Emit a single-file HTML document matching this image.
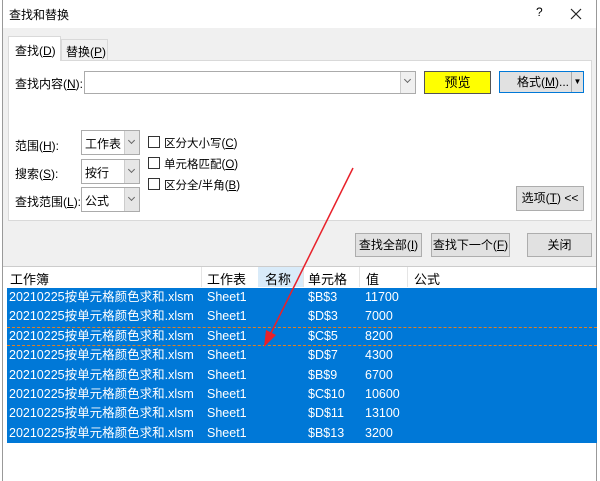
<!DOCTYPE html>
<html><head><meta charset="utf-8"><style>
*{margin:0;padding:0;box-sizing:border-box}
body{width:600px;height:481px;overflow:hidden;background:#fff;font-family:"Liberation Sans","Noto Sans CJK SC",sans-serif;font-size:12px;color:#000;position:relative}
.a{position:absolute}
.u{text-decoration:underline}
.btn{position:absolute;background:#e1e1e1;border:1px solid #adadad;text-align:center;font-size:12px}
.dd{position:absolute;left:81px;width:59px;height:25px;border:1px solid #ababab;background:#fff}
.dd span{position:absolute;left:3px;top:4px;font-size:12px}
.dd i{position:absolute;right:0;top:0;width:15px;height:23px;background:#e6e6e6;border-left:1px solid #ccc}
.dd i:after{content:"";position:absolute;left:4px;top:7px;width:4px;height:4px;border-right:1px solid #666;border-bottom:1px solid #666;transform:rotate(45deg)}
.cb{position:absolute;left:148px;width:12px;height:12px;border:1px solid #333;background:#fff}
.cl{position:absolute;left:164px;font-size:11.5px}
.row{position:absolute;left:7px;width:590px;height:19.4px;background:#0078d7;color:#fff;font-size:12.5px;line-height:19px}
.row span{position:absolute}
</style></head><body>
<div class="a" style="left:2px;top:0;width:595px;height:481px;background:#f0f0f0;border-left:1px solid #999;border-right:1px solid #999"></div>
<div class="a" style="left:3px;top:0;width:593px;height:28px;background:#fff"></div>
<div class="a" style="left:9px;top:6px;font-size:12px">查找和替换</div>
<div class="a" style="left:536px;top:5px;font-size:12px">?</div>
<svg class="a" style="left:570px;top:8px" width="12" height="12"><path d="M1 1L11 11M11 1L1 11" stroke="#222" stroke-width="1.2"/></svg>
<div class="a" style="left:8px;top:60px;width:584px;height:161px;background:#fff;border:1px solid #d9d9d9"></div>
<div class="a" style="left:8px;top:36px;width:53px;height:25px;background:#fff;border:1px solid #d9d9d9;border-bottom:none"></div>
<div class="a" style="left:15px;top:42px">查找(<span class="u">D</span>)</div>
<div class="a" style="left:61px;top:39px;width:47px;height:21px;background:#f0f0f0;border:1px solid #d9d9d9;border-bottom:none"></div>
<div class="a" style="left:66px;top:43px">替换(<span class="u">P</span>)</div>
<div class="a" style="left:15px;top:75px">查找内容(<span class="u">N</span>):</div>
<div class="a" style="left:84px;top:71px;width:332px;height:23px;border:1px solid #ababab;background:#fff"></div>
<div class="a" style="left:400px;top:72px;width:15px;height:21px;background:#f0f0f0;border-left:1px solid #ccc"></div>
<div class="a" style="left:405px;top:77px;width:5px;height:5px;border-right:1px solid #666;border-bottom:1px solid #666;transform:rotate(45deg)"></div>
<div class="a" style="left:424px;top:71px;width:67px;height:23px;background:#ffff00;border:1px solid #555;text-align:center;font-size:13px;line-height:21px">预览</div>
<div class="a" style="left:499px;top:71px;width:85px;height:22px;background:#e1e1e1;border:1px solid #0078d7;font-size:12px;line-height:20px"><span style="position:absolute;left:17px">格式(<span class="u">M</span>)...</span><span style="position:absolute;left:71px;top:0;height:20px;border-left:1px solid #aaa;width:12px;font-size:8px;text-align:center">▼</span></div>
<div class="a" style="left:15px;top:137px">范围(<span class="u">H</span>):</div>
<div class="a" style="left:15px;top:165px">搜索(<span class="u">S</span>):</div>
<div class="a" style="left:15px;top:193px">查找范围(<span class="u">L</span>):</div>
<div class="dd" style="top:130px"><span>工作表</span><i></i></div>
<div class="dd" style="top:159px"><span>按行</span><i></i></div>
<div class="dd" style="top:187px"><span>公式</span><i></i></div>
<div class="cb" style="top:136px"></div><div class="cl" style="top:135px">区分大小写(<span class="u">C</span>)</div>
<div class="cb" style="top:157px"></div><div class="cl" style="top:156px">单元格匹配(<span class="u">O</span>)</div>
<div class="cb" style="top:178px"></div><div class="cl" style="top:177px">区分全/半角(<span class="u">B</span>)</div>
<div class="btn" style="left:516px;top:186px;width:68px;height:25px;line-height:23px">选项(<span class="u">T</span>) &lt;&lt;</div>
<div class="btn" style="left:355px;top:233px;width:67px;height:24px;line-height:22px">查找全部(<span class="u">I</span>)</div>
<div class="btn" style="left:431px;top:233px;width:79px;height:24px;line-height:22px">查找下一个(<span class="u">F</span>)</div>
<div class="btn" style="left:527px;top:233px;width:65px;height:24px;line-height:22px">关闭</div>
<div class="a" style="left:3px;top:266px;width:593px;height:215px;background:#fff;border-top:1px solid #ccc"></div>
<div class="a" style="left:258px;top:267px;width:45px;height:20px;background:#d9ebf9"></div>
<div class="a" style="top:269px;left:10px;font-size:13px">工作簿</div>
<div class="a" style="top:269px;left:207px;font-size:13px">工作表</div>
<div class="a" style="top:269px;left:265px;font-size:13px">名称</div>
<div class="a" style="top:269px;left:308px;font-size:13px">单元格</div>
<div class="a" style="top:269px;left:366px;font-size:13px">值</div>
<div class="a" style="top:269px;left:414px;font-size:13px">公式</div>
<div class="a" style="left:201px;top:267px;height:20px;border-left:1px solid #e5e5e5"></div>
<div class="a" style="left:303px;top:267px;height:20px;border-left:1px solid #e5e5e5"></div>
<div class="a" style="left:359px;top:267px;height:20px;border-left:1px solid #e5e5e5"></div>
<div class="a" style="left:407px;top:267px;height:20px;border-left:1px solid #e5e5e5"></div>
<div class="row" style="top:288px"><span style="left:2px">20210225按单元格颜色求和.xlsm</span><span style="left:200px">Sheet1</span><span style="left:301px">$B$3</span><span style="left:358px">11700</span></div>
<div class="row" style="top:307.4px"><span style="left:2px">20210225按单元格颜色求和.xlsm</span><span style="left:200px">Sheet1</span><span style="left:301px">$D$3</span><span style="left:358px">7000</span></div>
<div class="row" style="top:326.8px;border-top:1px dashed #e08020;border-bottom:1px dashed #e08020;line-height:17px"><span style="left:2px">20210225按单元格颜色求和.xlsm</span><span style="left:200px">Sheet1</span><span style="left:301px">$C$5</span><span style="left:358px">8200</span></div>
<div class="row" style="top:346.2px"><span style="left:2px">20210225按单元格颜色求和.xlsm</span><span style="left:200px">Sheet1</span><span style="left:301px">$D$7</span><span style="left:358px">4300</span></div>
<div class="row" style="top:365.6px"><span style="left:2px">20210225按单元格颜色求和.xlsm</span><span style="left:200px">Sheet1</span><span style="left:301px">$B$9</span><span style="left:358px">6700</span></div>
<div class="row" style="top:385px"><span style="left:2px">20210225按单元格颜色求和.xlsm</span><span style="left:200px">Sheet1</span><span style="left:301px">$C$10</span><span style="left:358px">10600</span></div>
<div class="row" style="top:404.4px"><span style="left:2px">20210225按单元格颜色求和.xlsm</span><span style="left:200px">Sheet1</span><span style="left:301px">$D$11</span><span style="left:358px">13100</span></div>
<div class="row" style="top:423.8px"><span style="left:2px">20210225按单元格颜色求和.xlsm</span><span style="left:200px">Sheet1</span><span style="left:301px">$B$13</span><span style="left:358px">3200</span></div>
<svg class="a" style="left:0;top:0" width="600" height="481"><line x1="353" y1="168" x2="270" y2="335" stroke="#e8212a" stroke-width="1.5"/><polygon points="264,347 266,330 276,335" fill="#e8212a"/></svg>
</body></html>
